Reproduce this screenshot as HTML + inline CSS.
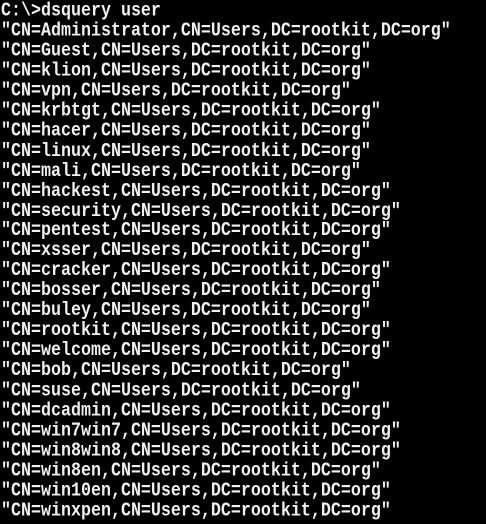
<!DOCTYPE html>
<html><head><style>
html,body{margin:0;padding:0;background:#000;width:486px;height:524px;overflow:hidden}
pre{margin:0;padding:2px 0 0 1px;font-family:"Liberation Mono",monospace;font-size:16.67px;line-height:16.95px;color:#f0f0f0;font-weight:bold;letter-spacing:0;transform:scale(1,1.18);transform-origin:0 0}
</style></head><body><pre>C:\&gt;dsquery user
"CN=Administrator,CN=Users,DC=rootkit,DC=org"
"CN=Guest,CN=Users,DC=rootkit,DC=org"
"CN=klion,CN=Users,DC=rootkit,DC=org"
"CN=vpn,CN=Users,DC=rootkit,DC=org"
"CN=krbtgt,CN=Users,DC=rootkit,DC=org"
"CN=hacer,CN=Users,DC=rootkit,DC=org"
"CN=linux,CN=Users,DC=rootkit,DC=org"
"CN=mali,CN=Users,DC=rootkit,DC=org"
"CN=hackest,CN=Users,DC=rootkit,DC=org"
"CN=security,CN=Users,DC=rootkit,DC=org"
"CN=pentest,CN=Users,DC=rootkit,DC=org"
"CN=xsser,CN=Users,DC=rootkit,DC=org"
"CN=cracker,CN=Users,DC=rootkit,DC=org"
"CN=bosser,CN=Users,DC=rootkit,DC=org"
"CN=buley,CN=Users,DC=rootkit,DC=org"
"CN=rootkit,CN=Users,DC=rootkit,DC=org"
"CN=welcome,CN=Users,DC=rootkit,DC=org"
"CN=bob,CN=Users,DC=rootkit,DC=org"
"CN=suse,CN=Users,DC=rootkit,DC=org"
"CN=dcadmin,CN=Users,DC=rootkit,DC=org"
"CN=win7win7,CN=Users,DC=rootkit,DC=org"
"CN=win8win8,CN=Users,DC=rootkit,DC=org"
"CN=win8en,CN=Users,DC=rootkit,DC=org"
"CN=win10en,CN=Users,DC=rootkit,DC=org"
"CN=winxpen,CN=Users,DC=rootkit,DC=org"</pre></body></html>
